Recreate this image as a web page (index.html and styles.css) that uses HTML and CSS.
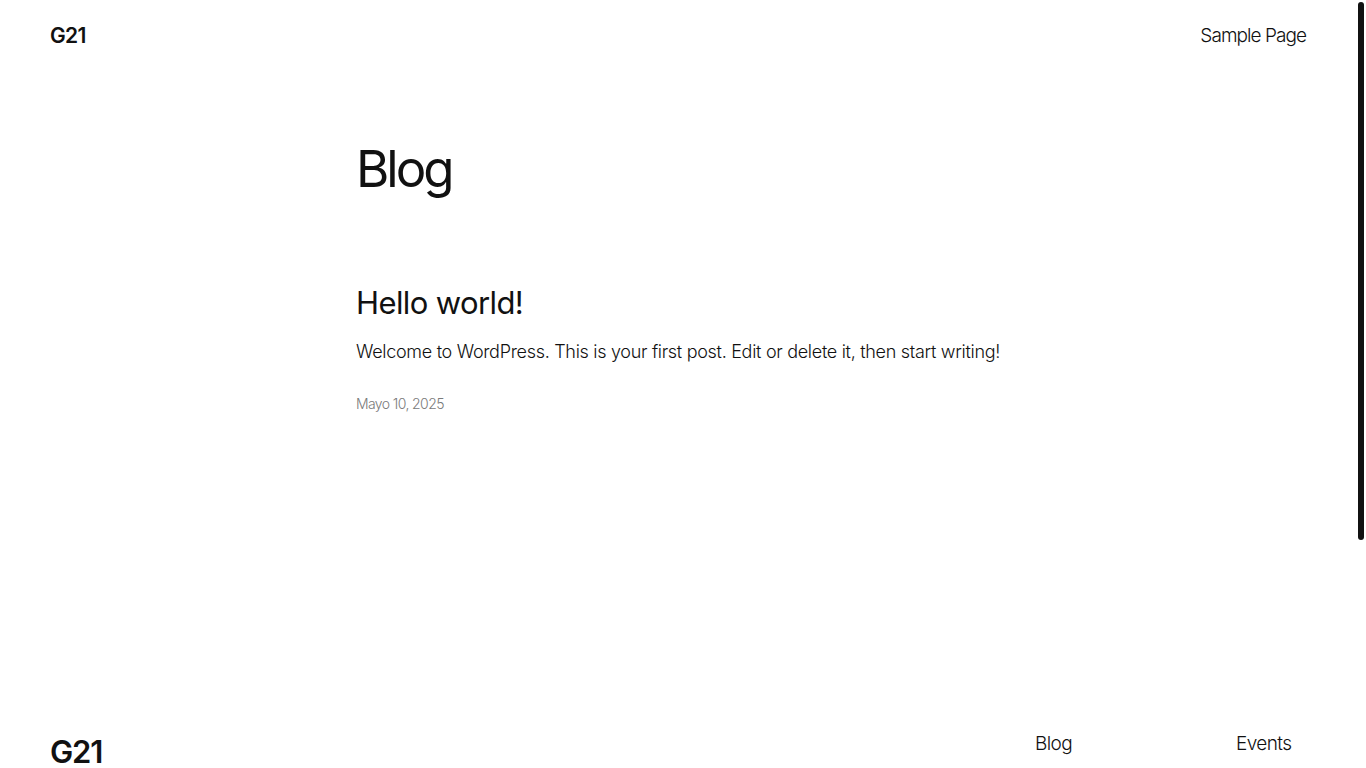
FILE: index.html
```html
<!DOCTYPE html>
<html lang="es">
<head>
<meta charset="utf-8">
<title>Blog – G21</title>
<link rel="stylesheet" href="styles.css">
</head>
<body>
<div class="page">
  <header class="site-header">
    <a class="site-title" href="#">G21</a>
    <nav class="header-nav"><a href="#">Sample Page</a></nav>
  </header>
  <main class="main">
    <h1 class="page-title">Blog</h1>
    <article class="post">
      <h2 class="post-title"><a href="#">Hello world!</a></h2>
      <p class="post-excerpt">Welcome to WordPress. This is your first post. Edit or delete it, then start writing!</p>
      <div class="post-date">Mayo 10, 2025</div>
    </article>
  </main>
  <footer class="site-footer">
    <a class="footer-title" href="#">G21</a>
    <nav class="footer-nav">
      <a href="#">Blog</a>
      <a href="#">Events</a>
    </nav>
  </footer>
</div>
<div class="scroll-thumb"></div>
</body>
</html>
```
FILE: styles.css
```css
html, body {
  margin: 0;
  padding: 0;
  height: 100%;
  overflow: hidden;
  background: #ffffff;
}
body {
  font-family: Inter, "Noto Sans", "Liberation Sans", sans-serif;
  color: #111111;
  -webkit-font-smoothing: antialiased;
}
a {
  color: inherit;
  text-decoration: none;
}
.page {
  display: flex;
  flex-direction: column;
}
.site-header {
  display: flex;
  justify-content: space-between;
  align-items: center;
  height: 70px;
  padding: 0 60px 0 50px;
}
.site-title {
  font-size: 21px;
  font-weight: 600;
  letter-spacing: -0.7px;
}
.header-nav a {
  font-size: 19px;
  font-weight: 300;
  letter-spacing: -0.95px;
}
.main {
  width: 654px;
  margin: 0 auto;
  height: 650px;
  box-sizing: border-box;
  padding-top: 68px;
}
.page-title {
  margin: 0;
  font-size: 51px;
  font-weight: 400;
  letter-spacing: -3px;
  line-height: 1.2;
}
.post {
  margin-top: 85px;
}
.post-title {
  margin: 0;
  font-size: 31px;
  font-weight: 400;
  letter-spacing: -0.6px;
  line-height: 1.2;
}
.post-excerpt {
  margin: 17px 0 0;
  font-size: 18px;
  font-weight: 300;
  letter-spacing: -0.3px;
  line-height: 1.5;
}
.post-date {
  margin-top: 30px;
  font-size: 14px;
  font-weight: 300;
  color: #7a7a7a;
  letter-spacing: -0.6px;
}
.site-footer {
  display: flex;
  justify-content: space-between;
  align-items: flex-start;
  padding: 0 50px;
}
.footer-title {
  margin-top: 13px;
  font-size: 31px;
  font-weight: 600;
  letter-spacing: -1.2px;
}
.footer-nav {
  display: grid;
  grid-template-columns: 201px 80px;
  margin-top: 12px;
}
.footer-nav a {
  font-size: 19px;
  font-weight: 300;
  letter-spacing: -0.6px;
}
.scroll-thumb {
  position: fixed;
  top: 2px;
  right: 2px;
  width: 6px;
  height: 538px;
  border-radius: 3px;
  background: #111111;
}
```
